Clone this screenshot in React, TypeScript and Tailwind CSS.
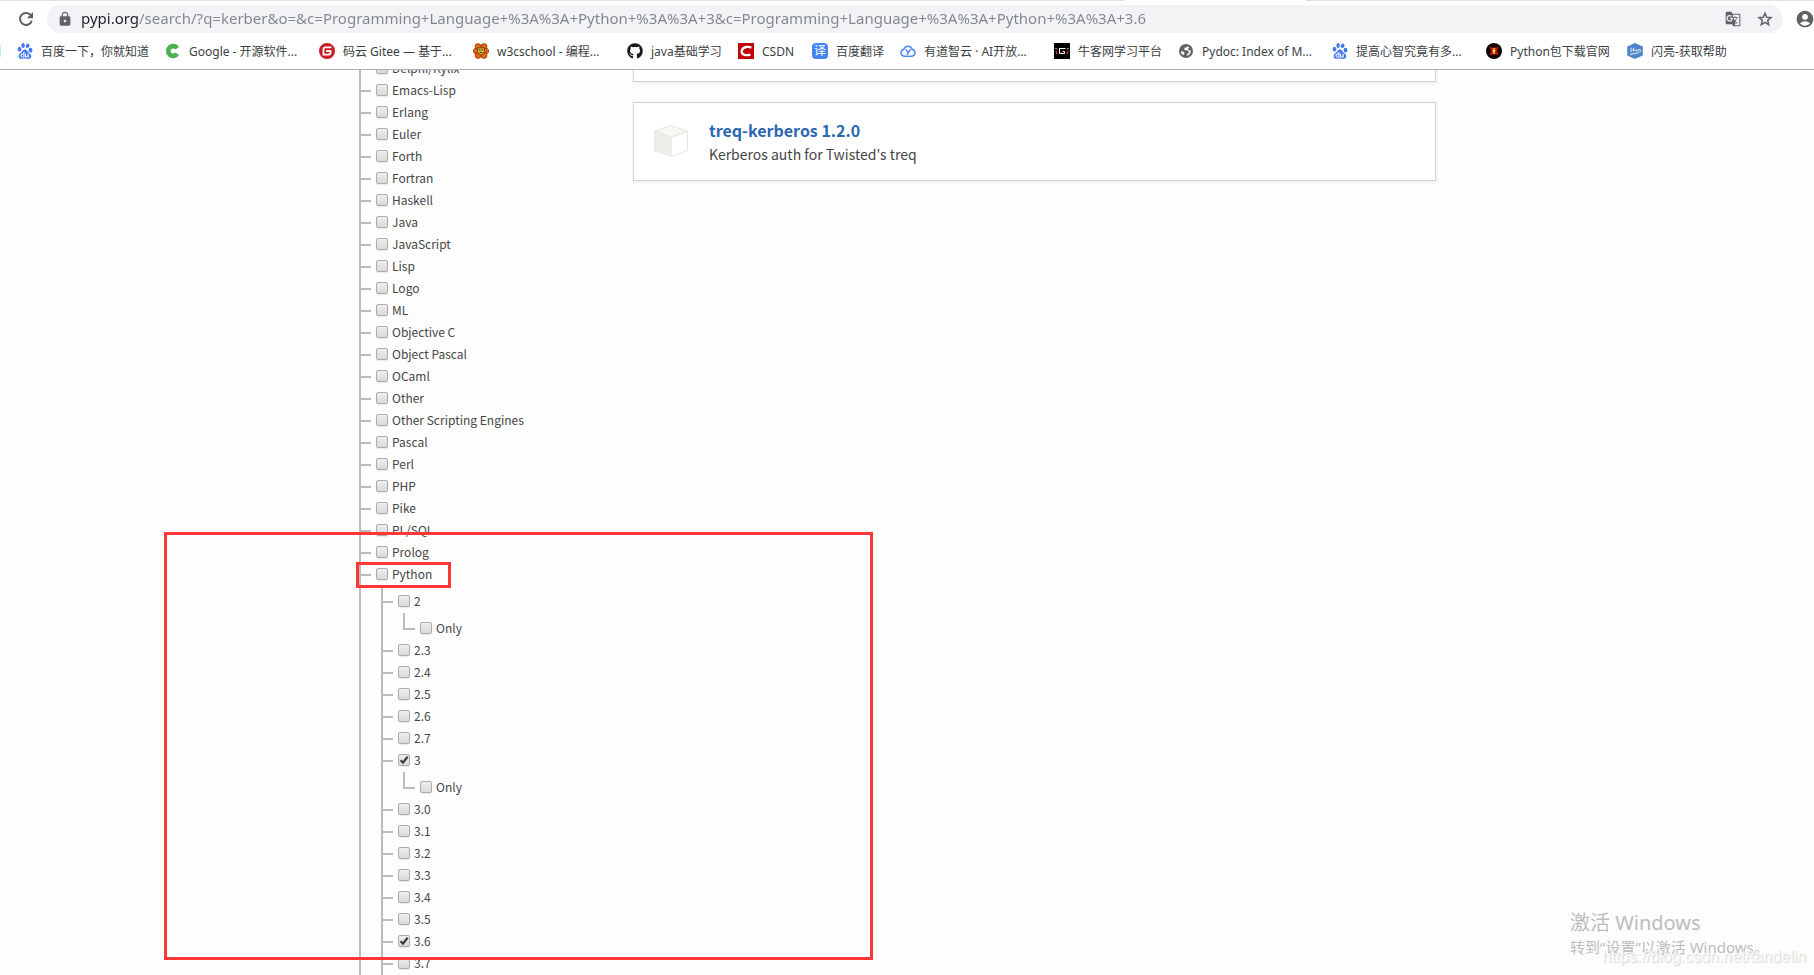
import { useState, type ReactNode } from "react";
import { FaGithub } from "react-icons/fa";
import { MdAccountCircle, MdGTranslate, MdLock } from "react-icons/md";
import { SiBaidu, SiGitee } from "react-icons/si";

interface Classifier {
  name: string;
  checked?: boolean;
  children?: Classifier[];
}

const PYTHON_VERSIONS: Classifier[] = [
  { name: "2", children: [{ name: "Only" }] },
  { name: "2.3" },
  { name: "2.4" },
  { name: "2.5" },
  { name: "2.6" },
  { name: "2.7" },
  { name: "3", checked: true, children: [{ name: "Only" }] },
  { name: "3.0" },
  { name: "3.1" },
  { name: "3.2" },
  { name: "3.3" },
  { name: "3.4" },
  { name: "3.5" },
  { name: "3.6", checked: true },
  { name: "3.7" },
];

const LANGUAGES: Classifier[] = [
  { name: "Delphi/Kylix" },
  { name: "Emacs-Lisp" },
  { name: "Erlang" },
  { name: "Euler" },
  { name: "Forth" },
  { name: "Fortran" },
  { name: "Haskell" },
  { name: "Java" },
  { name: "JavaScript" },
  { name: "Lisp" },
  { name: "Logo" },
  { name: "ML" },
  { name: "Objective C" },
  { name: "Object Pascal" },
  { name: "OCaml" },
  { name: "Other" },
  { name: "Other Scripting Engines" },
  { name: "Pascal" },
  { name: "Perl" },
  { name: "PHP" },
  { name: "Pike" },
  { name: "PL/SQL" },
  { name: "Prolog" },
  { name: "Python", children: PYTHON_VERSIONS },
];

function ReloadIcon() {
  return (
    <svg viewBox="0 0 16 16" className="h-4 w-4">
      <path d="M12.9 4.4A6 6 0 1 0 13.8 9.6" fill="none" stroke="currentColor" strokeWidth="2" />
      <path d="M15 1v6.2H8.8Z" fill="currentColor" />
    </svg>
  );
}

function StarIcon() {
  return (
    <svg viewBox="0 0 16 16" className="h-4 w-4">
      <path
        d="m8 2.2 1.7 4 4.3.4-3.3 2.800 1 4.300L8 11.400l-3.700 2.300 1-4.300L2 6.600l4.300-.4Z"
        fill="none"
        stroke="currentColor"
        strokeWidth="1.5"
      />
    </svg>
  );
}

function GreenC() {
  return (
    <svg viewBox="0 0 16 16" className="h-4 w-4">
      <path d="M12.2 5.3A4.9 4.9 0 1 0 12.2 10.7" fill="none" stroke="#4caf50" strokeWidth="4.6" />
    </svg>
  );
}

function LionFlower() {
  return (
    <svg viewBox="0 0 16 16" className="h-4 w-4">
      <g fill="#e8640c" stroke="#8a3a08" strokeWidth="0.7">
        <circle cx="5" cy="3.6" r="3" />
        <circle cx="11" cy="3.6" r="3" />
        <circle cx="13" cy="8" r="2.7" />
        <circle cx="11" cy="12.4" r="3" />
        <circle cx="5" cy="12.4" r="3" />
        <circle cx="3" cy="8" r="2.7" />
      </g>
      <path d="M4.6 4.8h6.8v4L8 12.4 4.6 8.8Z" fill="#d9b53a" stroke="#4a3a10" strokeWidth="0.8" />
      <path d="M6 6.8h1.4M8.6 6.8H10M7 9.4h2" stroke="#3b2a08" strokeWidth="1" />
    </svg>
  );
}

function CsdnIcon() {
  return (
    <svg viewBox="0 0 16 16" className="h-4 w-4">
      <rect width="16" height="16" fill="#c1000b" />
      <path d="M13.4 4.6C11 3.5 4.4 3 3.7 8.2 3.3 12.4 8.6 12.6 12.4 11.6" fill="none" stroke="#fff" strokeWidth="2.4" />
    </svg>
  );
}

function CloudY() {
  return (
    <svg viewBox="0 0 16 16" className="h-4 w-4" fill="none" stroke="#4a8af4">
      <path d="M4.2 13.2a3.5 3.5 0 0 1-.4-6.9 4.4 4.4 0 0 1 8.4 0 3.5 3.5 0 0 1-.4 6.9Z" strokeWidth="1.4" />
      <path d="m5.8 6.4 2.4 3.2M10.6 6.2 7 11.6" strokeWidth="1.5" />
    </svg>
  );
}

function NowcoderIcon() {
  return (
    <svg viewBox="0 0 16 16" className="h-4 w-4">
      <rect width="16" height="16" fill="#000" />
      <path d="M5.5 5.5h6M5.5 5v5.5h5v-2H8.4M1.5 5 3 6.5M14.5 5 13 6.5" fill="none" stroke="#fff" strokeWidth="1" />
      <path d="M1.5 8.5h1v2h1M14.5 8.5h-1v2h-1M7.5 9.6l2-2" fill="none" stroke="#e0442e" strokeWidth="1" />
    </svg>
  );
}

function DefaultGlobe() {
  return (
    <svg viewBox="0 0 16 16" className="h-4 w-4">
      <circle cx="8" cy="8" r="7" fill="#5f6368" />
      <path d="M9.6 3.2 8.4 4.6H7L6 6l1.2 1.2h2.2l1.4 1.6v1.6H9.4l-.8 2.4a4.8 4.8 0 0 0 4.2-5.4h-1.600L10 6l1.200-1.600Z" fill="#fff" />
      <path d="M2.8 8.4h2.4l1.2 1.2v1.4l-1 1.200a5 5 0 0 1-2.600-3.800Z" fill="#fff" />
    </svg>
  );
}

function EmberIcon() {
  return (
    <svg viewBox="0 0 16 16" className="h-4 w-4">
      <circle cx="8" cy="8" r="8" fill="#120202" />
      <path d="M3.4 3.4 8 5.4l4.6-2L11 8l1.6 4.6L8 10.6l-4.6 2L5 8Z" fill="#b8130a" />
      <path d="M6.4 4.8h3.2L8.8 8l.8 3.2H6.4L7.2 8Z" fill="#f07a1a" />
      <circle cx="8" cy="8" r="1.4" fill="#ffe24a" />
    </svg>
  );
}

function SharpHexagon() {
  return (
    <svg viewBox="0 0 16 16" className="h-4 w-4">
      <path d="M8 0 15.8 3.6v8.8L8 16 .2 12.4V3.6Z" fill="#4f86c9" />
      <path d="M5 5.2c-1.6 0-2 1.4-.8 1.8s.6 1.8-1 1.6M6.3 4.8v3.6M6.3 7c1-1 1.6-.4 1.5 1.2M10 6.6c-1.4 0-1.2 1.8 0 1.5V6.6M11.6 8.2V6.4h1M13 9.4l.3-3" fill="none" stroke="#fff" strokeWidth="0.8" />
      <path d="M3 11.4c3-.8 6-.8 9-1.8" fill="none" stroke="#fff" strokeWidth="0.9" />
    </svg>
  );
}

// width covers the icon, the label and the gap to the next bookmark
const BOOKMARKS: { label: string; width: string; icon: ReactNode }[] = [
  { label: "百度一下，你就知道", width: "w-[148px]", icon: <SiBaidu className="h-4 w-4 text-[#4279f0]" /> },
  { label: "Google - 开源软件...", width: "w-[154px]", icon: <GreenC /> },
  { label: "码云 Gitee — 基于...", width: "w-[154px]", icon: <SiGitee className="h-4 w-4 text-[#c71d23]" /> },
  { label: "w3cschool - 编程...", width: "w-[154px]", icon: <LionFlower /> },
  { label: "java基础学习", width: "w-[111px]", icon: <FaGithub className="h-4 w-4 text-[#191717]" /> },
  { label: "CSDN", width: "w-[74px]", icon: <CsdnIcon /> },
  {
    label: "百度翻译",
    width: "w-[88px]",
    icon: (
      <span className="flex h-4 w-4 items-center justify-center rounded-sm bg-[#4285f4] text-xs leading-4 text-white">译</span>
    ),
  },
  { label: "有道智云 · AI开放...", width: "w-[154px]", icon: <CloudY /> },
  { label: "牛客网学习平台", width: "w-[124px]", icon: <NowcoderIcon /> },
  { label: "Pydoc: Index of M...", width: "w-[154px]", icon: <DefaultGlobe /> },
  { label: "提高心智究竟有多...", width: "w-[154px]", icon: <SiBaidu className="h-4 w-4 text-[#4279f0]" /> },
  { label: "Python包下载官网", width: "w-[141px]", icon: <EmberIcon /> },
  { label: "闪亮-获取帮助", width: "w-[120px]", icon: <SharpHexagon /> },
];

function BrowserBar() {
  const [url, setUrl] = useState(
    "pypi.org/search/?q=kerber&o=&c=Programming+Language+%3A%3A+Python+%3A%3A+3&c=Programming+Language+%3A%3A+Python+%3A%3A+3.6"
  );

  return (
    <header className="shrink-0 border-b border-[#b0b0b0] bg-white font-['Noto_Sans','Noto_Sans_CJK_SC',sans-serif]">
      <div className="flex h-[5px] justify-between">
        <div className="h-px w-[62%] bg-[#dee1e6]" />
        <div className="h-px w-[28%] bg-[#dee1e6]" />
      </div>
      <div className="flex h-7 items-center">
        <button aria-label="Reload" className="flex w-[47px] shrink-0 justify-center pl-1 text-[#5f6368]">
          <ReloadIcon />
        </button>
        <div className="flex h-7 min-w-0 flex-1 items-center rounded-full bg-[#f1f3f4] px-2.5 text-[#5f6368]">
          <MdLock className="h-4 w-4 shrink-0" />
          <input
            aria-label="Address"
            value={url}
            onChange={(e) => setUrl(e.target.value)}
            className="ml-2 h-7 min-w-0 flex-1 bg-[linear-gradient(to_right,#202124_57px,#80868b_57px)] bg-clip-text pb-0.5 text-[15px] leading-6 text-transparent outline-none"
          />
          <button aria-label="Translate this page" className="mr-4">
            <MdGTranslate className="h-4 w-4" />
          </button>
          <button aria-label="Bookmark this page">
            <StarIcon />
          </button>
        </div>
        <button aria-label="Profile" className="w-[31px] shrink-0 pl-3 text-[#5f6368]">
          <MdAccountCircle className="h-5 w-5" />
        </button>
      </div>
      <nav className="flex h-9 items-center overflow-hidden">
        <span className="mr-4 h-3 w-px shrink-0 bg-[#b8f4f6]" />
        {BOOKMARKS.map((bookmark) => (
          <a
            key={bookmark.label}
            href="#"
            className={`flex shrink-0 items-center gap-2 text-xs whitespace-nowrap text-[#3c4043] ${bookmark.width}`}
          >
            {bookmark.icon}
            <span className="pt-px">{bookmark.label}</span>
          </a>
        ))}
      </nav>
    </header>
  );
}

function ClassifierRow({ item }: { item: Classifier }) {
  const [checked, setChecked] = useState(Boolean(item.checked));

  return (
    <label className="ml-[5px] flex h-[22px] items-center gap-1 pb-0.5 text-xs whitespace-nowrap text-[#464646]">
      <span className="grid h-3 w-3">
        <input
          type="checkbox"
          checked={checked}
          onChange={(e) => setChecked(e.target.checked)}
          className="col-start-1 row-start-1 h-3 w-3 appearance-none rounded-xs border border-[#acacac] bg-linear-to-b from-[#eee] to-[#dadada] shadow-[0_1px_1px_rgba(0,0,0,0.08)]"
        />
        {checked ? (
          <svg viewBox="0 0 12 12" className="pointer-events-none col-start-1 row-start-1 h-3 w-3">
            <path d="M2.6 6.2 5 8.6 9.6 2.8" fill="none" stroke="#3a3a3a" strokeWidth="2.2" />
          </svg>
        ) : null}
      </span>
      {item.name}
    </label>
  );
}

function ClassifierTree({ items, level = 1 }: { items: Classifier[]; level?: number }) {
  return (
    <ul className={level === 1 ? "border-l-2 border-[#bbb]" : "ml-5 border-l-2 border-[#bbb] pt-[5px]"}>
      {items.map((item) => (
        <li key={item.name}>
          <div className="flex items-center">
            <span className="h-0.5 w-2.5 bg-[#bbb]" />
            <ClassifierRow item={item} />
          </div>
          {item.children && level === 1 ? <ClassifierTree items={item.children} level={2} /> : null}
          {item.children && level === 2 ? (
            <ul className="ml-5">
              {item.children.map((child) => (
                <li key={child.name} className="flex h-[27px] items-start">
                  <span className="h-[17px] w-3 border-b-2 border-l-2 border-[#bbb]" />
                  <div className="pt-[5px]">
                    <ClassifierRow item={child} />
                  </div>
                </li>
              ))}
            </ul>
          ) : null}
        </li>
      ))}
    </ul>
  );
}

function PackageCube() {
  return (
    <svg viewBox="0 0 34 32" className="h-8 w-[34px] shrink-0" stroke="#e6e6e3" strokeWidth="1" strokeLinejoin="round">
      <path d="M.5 6.2 17 .5l16.5 5.7L17 12.2Z" fill="#f7f7f4" />
      <path d="M.5 6.2 17 12.2v19.3L.5 25.8Z" fill="#eeeeeb" />
      <path d="M33.5 6.2 17 12.2v19.3l16.5-5.7Z" fill="#fff" />
    </svg>
  );
}

export default function App() {
  return (
    <div className="relative flex h-screen flex-col overflow-hidden bg-[#fdfdfd]">
      <BrowserBar />
      <div className="min-h-0 flex-1 overflow-hidden pr-[19px] font-['Noto_Sans_CJK_SC',sans-serif]">
        <div className="mx-auto flex max-w-[1077px]">
          <aside className="-mt-3 w-[274px] shrink-0">
            <ClassifierTree items={LANGUAGES} />
          </aside>
          <main className="min-w-0 flex-1">
            <div className="h-3 border border-t-0 border-[#d3d3d3] bg-white shadow-[1px_1px_2px_1px_rgba(0,0,0,0.05)]" />
            <a
              href="#"
              className="mt-5 flex h-[79px] items-center border border-[#d3d3d3] bg-white pb-0.5 pl-5 shadow-[1px_1px_2px_1px_rgba(0,0,0,0.05)]"
            >
              <PackageCube />
              <div className="ml-[21px] pt-0.5">
                <h3 className="text-base leading-6 font-bold text-[#2b66b1]">treq-kerberos 1.2.0</h3>
                <p className="text-sm leading-6 text-[#464646]">Kerberos auth for Twisted's treq</p>
              </div>
            </a>
          </main>
        </div>
      </div>

      {/* marked area */}
      <div className="pointer-events-none absolute top-[532px] left-[164px] h-[428px] w-[709px] border-3 border-[#ff3737]" />
      <div className="pointer-events-none absolute top-[562px] left-[356px] h-[26px] w-[95px] border-3 border-[#ff3737]" />

      <div className="pointer-events-none absolute right-[52px] bottom-[18px] w-48 font-['Noto_Sans','Noto_Sans_CJK_SC',sans-serif] whitespace-nowrap text-[#bcbcbc]">
        <p className="text-xl leading-7">激活 Windows</p>
        <p className="text-[15px] leading-5">转到“设置”以激活 Windows。</p>
      </div>
      <p className="pointer-events-none absolute right-2 bottom-2 font-['Liberation_Sans',sans-serif] text-base leading-5 text-[#f8f8f8] [text-shadow:1px_1px_1px_#d4d4d4]">
        https://blog.csdn.net/tandelin
      </p>
    </div>
  );
}
